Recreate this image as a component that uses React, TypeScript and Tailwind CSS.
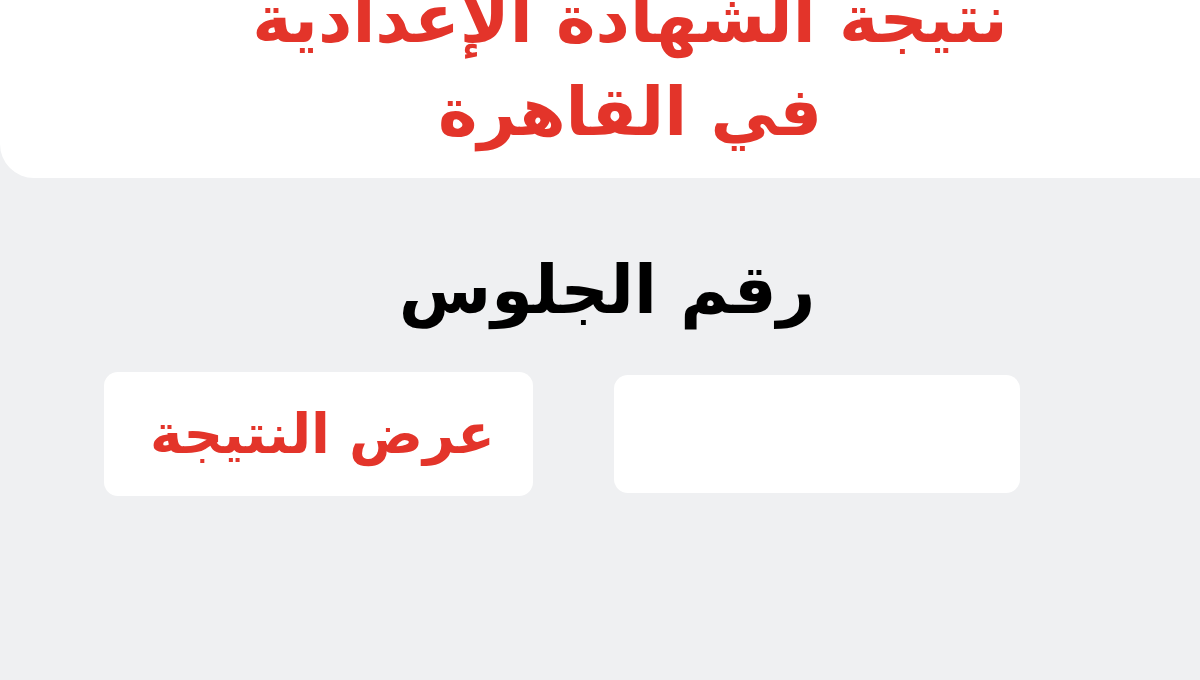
export default function App() {
  const arabic = { fontFamily: '"DejaVu Sans", "Noto Sans", sans-serif' }

  return (
    <div className="w-[1200px] h-[680px] overflow-hidden bg-[#eff0f2]" style={arabic}>
      <header className="h-[178px] w-[1260px] bg-white rounded-bl-[34px] overflow-hidden">
        <h1
          dir="rtl"
          className="w-[1260px] mt-[-27px] text-center font-bold text-[#e3342a] text-[67px] leading-[93px]"
        >
          نتيجة الشهادة الإعدادية
          <br />
          في القاهرة
        </h1>
      </header>

      <section className="flex flex-col">
        <h2 dir="rtl" className="mt-[67px] text-center font-bold text-black text-[67px] leading-[90px] ml-[14px]">
          رقم الجلوس
        </h2>

        <div className="flex items-center mt-[37px] pl-[104px] gap-[81px]">
          <button
            dir="rtl"
            className="w-[429px] h-[124px] bg-white rounded-[14px] font-bold text-[#e3342a] text-[55px] leading-none pl-2"
          >
            عرض النتيجة
          </button>
          <input
            dir="rtl"
            aria-label="رقم الجلوس"
            className="w-[406px] h-[118px] bg-white rounded-[14px] outline-none px-6 text-[40px]"
          />
        </div>
      </section>
    </div>
  )
}
